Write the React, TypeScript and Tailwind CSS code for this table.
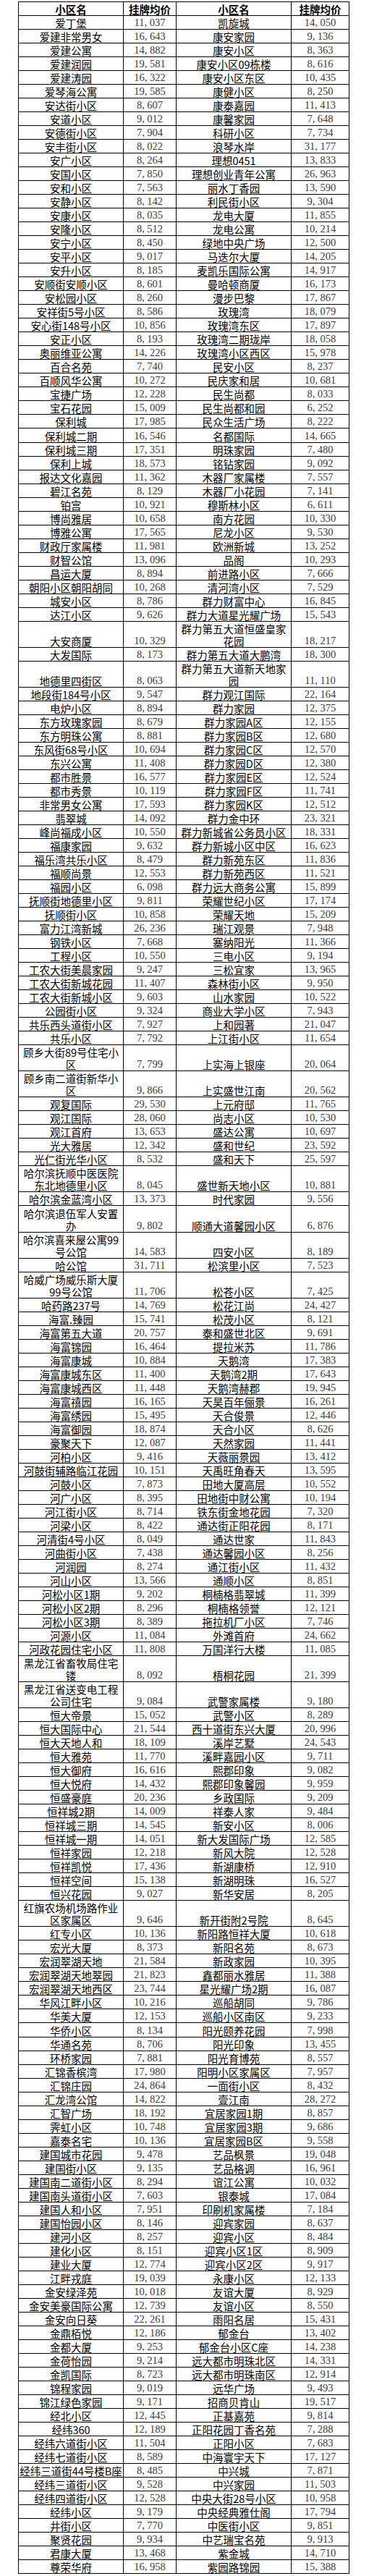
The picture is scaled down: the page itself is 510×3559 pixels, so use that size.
const raw = `爱丁堡 11,037 凯旋城 14,050
爱建非常男女 16,643 康安家园 9,136
爱建公寓 14,882 康安小区 8,363
爱建润园 19,581 康安小区09栋楼 8,616
爱建涛园 16,322 康安小区东区 10,435
爱琴海公寓 19,585 康健小区 8,250
安达街小区 8,607 康泰嘉园 11,413
安道小区 9,012 康馨家园 7,648
安德街小区 7,904 科研小区 7,734
安丰街小区 8,022 浪琴水岸 31,177
安广小区 8,264 理想0451 13,833
安国小区 7,850 理想创业青年公寓 26,963
安和小区 7,563 丽水丁香园 13,590
安静小区 8,142 利民街小区 9,304
安康小区 8,035 龙电大厦 11,855
安隆小区 8,512 龙电公寓 10,214
安宁小区 8,450 绿地中央广场 12,500
安平小区 9,017 马迭尔大厦 14,205
安升小区 8,185 麦凯乐国际公寓 14,917
安顺街安顺小区 8,601 曼哈顿商厦 16,173
安松园小区 8,260 漫步巴黎 17,867
安祥街5号小区 8,586 玫瑰湾 18,079
安心街148号小区 10,856 玫瑰湾东区 17,897
安正小区 8,193 玫瑰湾二期珑岸 18,058
奥丽维亚公寓 14,226 玫瑰湾小区西区 15,978
百合名苑 7,740 民安小区 8,237
百顺风华公寓 10,272 民庆家和居 10,681
宝捷广场 12,228 民生尚都 8,033
宝石花园 15,009 民生尚都和园 6,252
保利城 17,985 民众生活广场 8,222
保利城二期 16,546 名都国际 14,665
保利城三期 17,351 明珠家园 7,480
保利上城 18,573 铭钻家园 9,092
报达文化嘉园 11,362 木器厂家属楼 7,557
碧江名苑 8,129 木器厂小花园 7,141
铂宫 10,921 穆斯林小区 6,611
博尚雅居 10,658 南方花园 10,330
博雅公寓 17,565 尼龙小区 9,530
财政厅家属楼 11,981 欧洲新城 13,252
财智公馆 13,096 品阁 10,293
昌运大厦 8,894 前进路小区 7,666
朝阳小区朝阳胡同 10,268 清河湾小区 7,529
城安小区 8,786 群力财富中心 16,845
达江小区 9,626 群力大道星光耀广场 15,543
大安商厦 10,329 群力第五大道恒盛皇家~花园 18,217
大发国际 8,173 群力第五大道大鹏湾 18,300
地德里四街区 8,063 群力第五大道新天地家~园 11,110
地段街184号小区 9,547 群力观江国际 22,164
电炉小区 8,894 群力家园 12,375
东方玫瑰家园 8,679 群力家园A区 12,155
东方明珠公寓 8,881 群力家园B区 12,680
东风街68号小区 10,694 群力家园C区 12,570
东兴公寓 11,408 群力家园D区 12,380
都市胜景 16,577 群力家园E区 12,524
都市秀景 10,119 群力家园F区 11,741
非常男女公寓 17,593 群力家园K区 12,512
翡翠城 14,092 群力金中环 23,321
峰尚福成小区 10,550 群力新城省公务员小区 18,331
福康家园 9,632 群力新城小区中区 16,623
福乐湾共乐小区 8,479 群力新苑东区 11,836
福顺尚景 12,553 群力新苑西区 11,521
福园小区 6,098 群力远大商务公寓 15,899
抚顺街地德里小区 9,811 荣耀世纪小区 17,174
抚顺街小区 10,858 荣耀天地 15,209
富力江湾新城 26,236 瑞江观景 7,948
钢铁小区 7,668 塞纳阳光 11,366
工程小区 10,550 三电小区 9,194
工农大街美晨家园 9,247 三松宜家 13,965
工农大街新城花园 11,407 森林街小区 9,950
工农大街新城小区 9,603 山水家园 10,522
公园街小区 9,324 商业大学小区 7,943
共乐西头道街小区 7,927 上和园著 21,047
共乐小区 7,792 上江街小区 11,654
顾乡大街89号住宅小~区 7,799 上实海上银座 20,064
顾乡南二道街新华小~区 9,866 上实盛世江南 20,562
观复国际 29,530 上元府邸 11,765
观江国际 28,060 尚志小区 10,530
观江首府 13,653 盛达公寓 10,697
光大雅居 12,342 盛和世纪 23,592
光仁街光华小区 8,532 盛和天下 25,597
哈尔滨抚顺中医医院~东北地德里小区 8,045 盛世新天地小区 10,881
哈尔滨金蓝湾小区 13,373 时代家园 9,556
哈尔滨退伍军人安置~办 9,802 顺通大道馨园小区 6,876
哈尔滨喜来屋公寓99~号公馆 14,583 四安小区 8,189
哈公馆 31,711 松滨里小区 7,523
哈威广场威乐斯大厦~99号公馆 11,706 松苍小区 7,425
哈药路237号 14,769 松花江尚 24,427
海富.臻园 15,741 松茂小区 8,121
海富第五大道 20,757 泰和盛世北区 9,691
海富锦园 16,464 提拉米苏 11,786
海富康城 10,884 天鹅湾 17,383
海富康城东区 11,400 天鹅湾2期 17,643
海富康城西区 11,448 天鹅湾赫郡 19,945
海富禧园 16,165 天昊百年俪景 16,261
海富绣园 15,495 天合俊景 12,446
海富御园 18,874 天合小区 8,626
豪聚天下 12,087 天然家园 11,441
河柏小区 9,416 天薇丽景园 13,412
河鼓街辅路临江花园 10,151 天禹旺角春天 13,595
河鼓小区 7,873 田地大厦高层 10,552
河广小区 8,395 田地街中财公寓 10,194
河江街小区 8,714 铁东街金地花园 7,320
河梁小区 8,422 通达街正阳花园 8,171
河清街4号小区 8,049 通达世家 11,843
河曲街小区 7,438 通达馨园小区 8,256
河润园 8,274 通江街小区 11,432
河山小区 13,566 通顺小区 8,851
河松小区1期 9,202 桐楠格翡翠城 11,399
河松小区2期 8,296 桐楠格领誉 12,121
河松小区3期 8,389 拖拉机厂小区 7,746
河源小区 11,084 外滩首府 24,662
河政花园住宅小区 11,808 万国洋行大楼 11,085
黑龙江省畜牧局住宅~镂 8,092 梧桐花园 21,399
黑龙江省送变电工程~公司住宅 9,084 武警家属楼 9,180
恒大帝景 15,052 武警小区 8,289
恒大国际中心 21,544 西十道街东兴大厦 20,996
恒大天地人和 18,109 溪岸艺墅 24,543
恒大雅苑 11,770 溪畔嘉园小区 9,711
恒大御府 16,616 熙郡印象 9,082
恒大悦府 14,432 熙郡印象馨园 9,959
恒盛豪庭 20,236 乡政国际 9,209
恒祥城2期 14,009 祥泰人家 9,484
恒祥城三期 14,545 新安小区 8,006
恒祥城一期 14,051 新大发国际广场 12,585
恒祥家园 12,218 新风大院 12,528
恒祥凯悦 17,436 新湖康桥 12,910
恒祥空间 15,138 新湖明珠 16,527
恒兴花园 9,027 新华安居 8,205
红旗农场机场路作业~区家属区 9,646 新开街附2号院 8,645
红专小区 10,136 新阳路恒祥大厦 10,618
宏光大厦 8,373 新阳名苑 8,673
宏润翠湖天地 21,584 新政家园 10,395
宏润翠湖天地翠园 21,823 鑫都丽水雅居 11,388
宏润翠湖天地西区 23,744 星光耀广场2期 16,087
华风江畔小区 10,216 巡船胡同 9,786
华美大厦 12,153 巡船小区南区 9,233
华侨小区 8,134 阳光颐养花园 7,998
华通名苑 8,706 阳光印象 13,455
环桥家园 7,881 阳光育博苑 8,557
汇锦香槟湾 17,980 阳明小区家属区 7,957
汇锦庄园 24,864 一面街小区 8,432
汇龙湾公馆 14,822 壹江南 28,272
汇智广场 18,192 宜居家园1期 8,857
霁虹小区 10,748 宜居家园3期 9,686
嘉泰名宅 10,136 宜居家园B区 9,558
建国城市花园 9,478 艺品枫景 19,048
建国街小区 9,135 艺品格调 16,961
建国南二道街小区 8,294 谊江公寓 10,032
建国南头道街小区 7,603 银泰城 17,084
建国人和小区 7,951 印刷机家属楼 7,184
建国怡园小区 8,146 迎宾家园 8,637
建河小区 8,257 迎宾小区 8,484
建化小区 8,151 迎宾小区1区 8,909
建业大厦 12,774 迎宾小区2区 9,917
江畔戎庭 19,039 永康小区 12,133
金安绿泽苑 10,018 友谊大厦 8,929
金安美豪国际公寓 12,739 友谊小区 8,550
金安向日葵 22,261 雨阳名居 15,431
金鼎栢悦 12,186 郁金台 13,402
金都大厦 9,253 郁金台小区C座 14,238
金荷怡园 9,214 远大都市明珠北区 14,331
金凯国际 8,723 远大都市明珠南区 12,914
锦程家园 9,019 远华广场 9,493
锦江绿色家园 9,171 招商贝肯山 19,517
经北小区 12,445 正基嘉苑 9,814
经纬360 12,189 正阳花园丁香名苑 7,288
经纬六道街小区 11,504 正阳小区 7,683
经纬七道街小区 8,589 中海寰宇天下 17,127
经纬三道街44号楼B座 8,485 中兴城 7,871
经纬三道街小区 9,528 中兴家园 11,503
经纬四道街小区 12,528 中央大街28号小区 10,958
经纬小区 9,179 中央经典雅仕阁 17,794
井街小区 7,770 中医街小区 9,851
聚贤花园 9,934 中艺瑞宝名苑 9,913
君康大厦 13,468 紫金城 14,710
尊荣华府 16,958 紫园路锦园 15,388`;

const rows = raw.split("\n").map((line) => line.trim().split(/\s+/));

const cjk = "font-['Noto_Sans_CJK_SC','Noto_Sans',sans-serif]";
const cell =
  "flex items-end justify-center text-center border-r border-black leading-[17px] whitespace-nowrap";

function Name({ text }: { text: string }) {
  const lines = text.split("~");
  return (
    <span className={`${cjk} text-[14.5px] text-black`}>
      {lines.map((l, i) => (
        <span key={i} className="block">
          {l}
        </span>
      ))}
    </span>
  );
}

function Price({ value }: { value: string }) {
  const [a, b] = value.split(",");
  return (
    <span className="font-['Liberation_Serif',serif] text-[14.5px] text-[#3c3c3c]">
      {a}
      <span className="mr-[3.5px]">,</span>
      {b}
    </span>
  );
}

export default function App() {
  return (
    <div className="bg-white min-h-[3559px] pt-[2px]">
      <div className="ml-[25px] w-[458px] border-l border-t border-black">
        {/* header */}
        <div className="flex h-[19.03px] border-b border-black">
          <div className={`${cell} w-[145px]`}>
            <span className={`${cjk} font-bold text-[14.5px]`}>小区名</span>
          </div>
          <div className={`${cell} w-[73px]`}>
            <span className={`${cjk} font-bold text-[14.5px]`}>挂牌均价</span>
          </div>
          <div className={`${cell} w-[159px]`}>
            <span className={`${cjk} font-bold text-[14.5px]`}>小区名</span>
          </div>
          <div className={`${cell} w-[80px]`}>
            <span className={`${cjk} font-bold text-[14.5px]`}>挂牌均价</span>
          </div>
        </div>

        {rows.map(([n1, p1, n2, p2], i) => {
          const tall = n1.includes("~") || n2.includes("~");
          return (
            <div
              key={i}
              className={`flex border-b border-black ${tall ? "h-[36.05px]" : "h-[19.03px]"}`}
            >
              <div className={`${cell} w-[145px]`}>
                <Name text={n1} />
              </div>
              <div className={`${cell} w-[73px]`}>
                <Price value={p1} />
              </div>
              <div className={`${cell} w-[159px]`}>
                <Name text={n2} />
              </div>
              <div className={`${cell} w-[80px]`}>
                <Price value={p2} />
              </div>
            </div>
          );
        })}
      </div>
    </div>
  );
}
